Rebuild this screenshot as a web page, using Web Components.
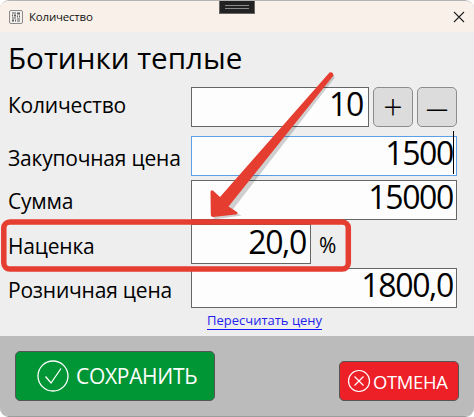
<!DOCTYPE html>
<html lang="ru">
<head>
<meta charset="utf-8">
<title>Количество</title>
<style>
    html, body { margin: 0; padding: 0; background: #fff; }
    body { font-family: "Open Sans", "Noto Sans", sans-serif; }
</style>
</head>
<body>
<qty-window>
    <win-titlebar slot="title" caption="Количество"></win-titlebar>
    <h-title slot="main">Ботинки теплые</h-title>
    <field-row slot="main" label="Количество" value="10" width="178" gap="9" pad="5" label-top="0" label-bottom="5">
        <step-button>+</step-button>
        <step-button style="font-size:22px;font-weight:400">—</step-button>
    </field-row>
    <field-row slot="main" label="Закупочная цена" value="1500" width="266" focused gap="4" label-top="4"></field-row>
    <field-row slot="main" label="Сумма" value="15000" width="266" gap="4" label-top="2"></field-row>
    <field-row slot="main" label="Наценка" value="20,0" width="120" gap="4" unit="%" pad="4" label-top="4" shift="1"></field-row>
    <field-row slot="main" label="Розничная цена" value="1800,0" width="266" label-top="4"></field-row>
    <recalc-link slot="main">Пересчитать цену</recalc-link>
    <action-button slot="footer" kind="save">СОХРАНИТЬ</action-button>
    <action-button slot="footer" kind="cancel">ОТМЕНА</action-button>
    <annot-overlay slot="overlay"></annot-overlay>
</qty-window>

<script>
class QtyWindow extends HTMLElement {
    constructor() {
        super();
        this.attachShadow({ mode: 'open' });
    }

    connectedCallback() {
        this.shadowRoot.innerHTML = `
        <style>
            :host {
                display: block;
                position: relative;
                width: 474px;
                height: 417px;
                box-sizing: border-box;
                border-top: 1px solid #b4b4b4;
                border-bottom: 1px solid #9c9c9c;
                border-radius: 9px;
                overflow: hidden;
                background: #eeeeee;
            }
            #wrap {
                display: flex;
                flex-direction: column;
                height: 100%;
            }
            main {
                flex: 0 0 304px;
                display: flex;
                flex-direction: column;
                padding-left: 8px;
            }
            footer {
                flex: 1;
                display: flex;
                justify-content: space-between;
                align-items: flex-end;
                background: #bbbbbb;
                padding: 0 15px 15px 15px;
            }
        </style>
        <div id="wrap">
            <slot name="title"></slot>
            <main><slot name="main"></slot></main>
            <footer><slot name="footer"></slot></footer>
        </div>
        <slot name="overlay"></slot>
        `;
    }
}

class WinTitlebar extends HTMLElement {
    constructor() {
        super();
        this.attachShadow({ mode: 'open' });
    }

    connectedCallback() {
        this.shadowRoot.innerHTML = `
        <style>
            :host {
                display: flex;
                align-items: center;
                position: relative;
                height: 31px;
                background: #f9f1e9;
                padding-left: 9px;
                color: #111;
                font-size: 11.5px;
                letter-spacing: -0.2px;
            }
            .icon { width: 14px; height: 14px; margin-right: 6px; }
            .close { margin-left: auto; margin-right: 9px; width: 12px; height: 12px; }
            .grip {
                position: absolute;
                left: 219px;
                top: 0;
                width: 34px;
                height: 12px;
                background: #222;
                border: 1px solid #666;
                border-top: none;
            }
            .grip::before, .grip::after {
                content: "";
                position: absolute;
                left: 5px;
                width: 24px;
                height: 1px;
                background: #8a8a8a;
            }
            .grip::before { top: 4px; }
            .grip::after { top: 7px; }
        </style>
        <svg class="icon" viewBox="0 0 14 14">
            <rect x="0.5" y="0.5" width="13" height="13" rx="1.5" fill="#f3f1ee" stroke="#8b8b8b"/>
            <path d="M3 2.5h4v1H3zM8 2.5h3v2H8zM3 4.5h1v2H3zM5 4.5h2v2H5zM8 5.5h1v2H8zM10 5.5h1v2h-1zM3 7.5h4v1H3zM3 9.5h2v2H3zM6 9.5h1v2H6zM8 8.5h3v1H8zM8 10.5h3v1H8z" fill="#5f5f5f"/>
        </svg>
        <span>${this.getAttribute('caption')}</span>
        <div class="grip"></div>
        <svg class="close" viewBox="0 0 12 12">
            <path d="M1 1L11 11M11 1L1 11" stroke="#222" stroke-width="1.1" fill="none"/>
        </svg>
        `;
    }
}

class HTitle extends HTMLElement {
    constructor() {
        super();
        this.attachShadow({ mode: 'open' });
    }

    connectedCallback() {
        this.shadowRoot.innerHTML = `
        <style>
            :host {
                display: block;
                height: 55px;
                font-size: 29.6px;
                line-height: 52px;
                color: #000;
                white-space: nowrap;
            }
        </style>
        <slot></slot>
        `;
    }
}

class FieldRow extends HTMLElement {
    constructor() {
        super();
        this.attachShadow({ mode: 'open' });
    }

    connectedCallback() {
        const width = this.getAttribute('width');
        const gap = this.getAttribute('gap') || 0;
        const unit = this.getAttribute('unit');
        const pad = this.getAttribute('pad') || 3;
        const shift = this.getAttribute('shift') || 0;
        const focused = this.hasAttribute('focused');
        this.shadowRoot.innerHTML = `
        <style>
            :host {
                display: flex;
                align-items: center;
                height: 40px;
                margin-bottom: ${gap}px;
                color: #000;
            }
            .label {
                flex: 0 0 183px;
                box-sizing: border-box;
                padding-top: ${this.getAttribute('label-top') || 0}px;
                padding-bottom: ${this.getAttribute('label-bottom') || 0}px;
                font-size: 21px;
                letter-spacing: -0.2px;
                white-space: nowrap;
            }
            .input {
                position: relative;
                box-sizing: border-box;
                width: ${width}px;
                height: 40px;
                background: #fdfdfd;
                border: 1px solid ${focused ? '#5aa0e8' : '#666666'};
                font-size: 32px;
                line-height: 32px;
                padding-top: ${shift}px;
                text-align: right;
                padding-right: ${pad}px;
                letter-spacing: -1.35px;
            }
            .caret {
                position: absolute;
                right: 2px;
                top: -6px;
                width: 1px;
                height: 43px;
                background: #000;
            }
            .unit { font-size: 21px; margin-left: 8px; padding-top: 2px; }
            ::slotted(step-button) { margin-left: 4px; }
        </style>
        <div class="label">${this.getAttribute('label')}</div>
        <div class="input">${this.getAttribute('value')}${focused ? '<i class="caret"></i>' : ''}</div>
        ${unit ? `<span class="unit">${unit}</span>` : ''}
        <slot></slot>
        `;
    }
}

class StepButton extends HTMLElement {
    constructor() {
        super();
        this.attachShadow({ mode: 'open' });
    }

    connectedCallback() {
        this.shadowRoot.innerHTML = `
        <style>
            :host {
                display: flex;
                align-items: center;
                justify-content: center;
                box-sizing: border-box;
                width: 40px;
                height: 40px;
                background: #dcdcdc;
                border: 1px solid #8c8c8c;
                border-radius: 5px;
                font-size: 34px;
                font-weight: 300;
                line-height: 1;
                color: #000;
            }
        </style>
        <slot></slot>
        `;
    }
}

class RecalcLink extends HTMLElement {
    constructor() {
        super();
        this.attachShadow({ mode: 'open' });
    }

    connectedCallback() {
        this.shadowRoot.innerHTML = `
        <style>
            :host {
                display: block;
                padding-left: 199px;
                font-size: 13px;
                line-height: 20px;
                margin-top: 2px;
                color: #2222ee;
            }
            span { border-bottom: 1px solid #1515f5; padding-bottom: 0; }
        </style>
        <span><slot></slot></span>
        `;
    }
}

class ActionButton extends HTMLElement {
    constructor() {
        super();
        this.attachShadow({ mode: 'open' });
    }

    connectedCallback() {
        const save = this.getAttribute('kind') === 'save';
        const icon = save
            ? `<svg width="32" height="32" viewBox="0 0 32 32" style="margin:0 7px 0 21px">
                 <circle cx="16" cy="16" r="15" fill="none" stroke="#fff" stroke-width="1.3"/>
                 <path d="M8.5 16.5L14 23L24 8.5" fill="none" stroke="#fff" stroke-width="1.3"/>
               </svg>`
            : `<svg width="24" height="24" viewBox="0 0 24 24" style="margin:0 2px 0 7px">
                 <circle cx="12" cy="12" r="10.5" fill="none" stroke="#fff" stroke-width="1.2"/>
                 <path d="M7.5 7.5L16.5 16.5M16.5 7.5L7.5 16.5" fill="none" stroke="#fff" stroke-width="1.2"/>
               </svg>`;
        this.shadowRoot.innerHTML = `
        <style>
            :host {
                display: flex;
                align-items: center;
                box-sizing: border-box;
                width: ${save ? 200 : 120}px;
                height: ${save ? 50 : 40}px;
                background: ${save ? '#009635' : '#ed2028'};
                border: 1px solid #555;
                border-radius: 5px;
                color: #fff;
                font-size: ${save ? 21 : 18.4}px;
                letter-spacing: -0.3px;
                white-space: nowrap;
            }
            svg { flex: none; }
        </style>
        ${icon}<slot></slot>
        `;
    }
}

class AnnotOverlay extends HTMLElement {
    constructor() {
        super();
        this.attachShadow({ mode: 'open' });
    }

    connectedCallback() {
        this.shadowRoot.innerHTML = `
        <style>
            :host {
                position: absolute;
                left: 0;
                top: -1px;
                width: 474px;
                height: 417px;
                pointer-events: none;
            }
            svg { display: block; }
        </style>
        <svg width="474" height="417" viewBox="0 0 474 417">
            <rect x="3.8" y="222" width="344.5" height="47" rx="6" fill="none" stroke="#e53d30" stroke-width="5.5"/>
            <path d="M333 76.5L230.5 209L240 214L212 218L212.5 192L220 199L329 73.5Q333 72 333 76.5Z" fill="#000" opacity="0.18" transform="translate(1.5 1.5)"/>
            <path d="M329.5 72.5Q333 71.5 333.5 75.5L228.5 206.5L237 212Q238.5 214 235.5 214.5L213 217Q211 217 210.8 215L210.5 192Q211 189 213.5 191L220 197Z" fill="#e53d30"/>
        </svg>
        `;
    }
}

customElements.define('qty-window', QtyWindow);
customElements.define('win-titlebar', WinTitlebar);
customElements.define('h-title', HTitle);
customElements.define('field-row', FieldRow);
customElements.define('step-button', StepButton);
customElements.define('recalc-link', RecalcLink);
customElements.define('action-button', ActionButton);
customElements.define('annot-overlay', AnnotOverlay);
</script>
</body>
</html>
